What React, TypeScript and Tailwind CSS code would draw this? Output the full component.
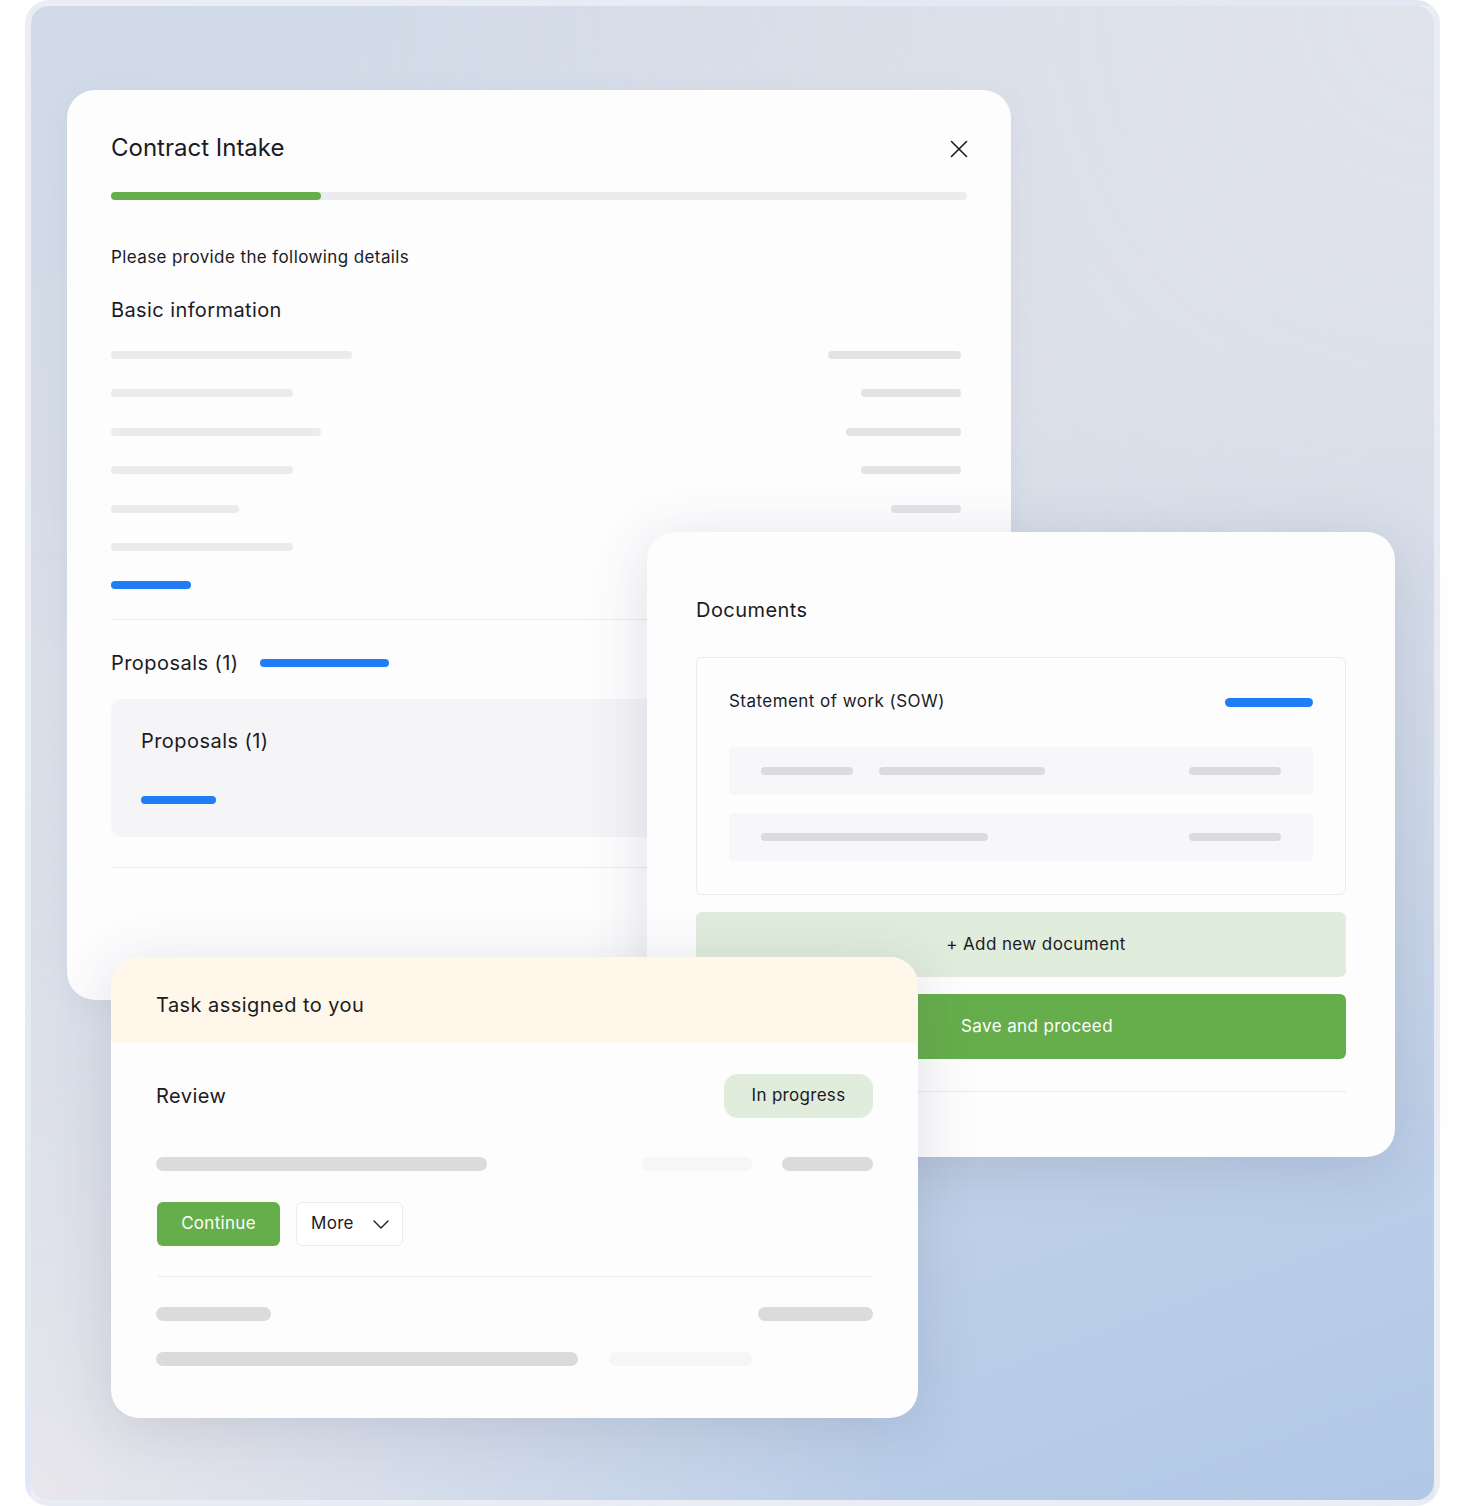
import { X } from "lucide-react";

// skeleton bar colours
const DARK = "bg-[#dbdadd]";
const LIGHT = "bg-[#ebeaed]";
const FAINT = "bg-[#f6f5f8]";

const Bar = ({ w, h = "h-[8px]", tone = LIGHT }: { w: string; h?: string; tone?: string }) => (
  <div className={`${w} ${h} ${tone} rounded-full`} />
);

const basicRows = [
  { left: "w-[241px]", right: "w-[133px]" },
  { left: "w-[182px]", right: "w-[100px]" },
  { left: "w-[210px]", right: "w-[115px]" },
  { left: "w-[182px]", right: "w-[100px]" },
  { left: "w-[128px]", right: "w-[70px]" },
  { left: "w-[182px]", right: "" },
];

const ContractIntake = () => (
  <div className="absolute left-[67px] top-[90px] w-[944px] h-[910px] rounded-[28px] bg-[#fdfdfe] shadow-[0_6px_30px_rgba(70,80,110,0.06)] px-[44px] pt-[42px]">
    <div className="flex items-center justify-between">
      <h1 className="text-[24px] leading-[32px] text-[#1b1b1f]">Contract Intake</h1>
      <X className="w-[30px] h-[30px] mr-[-7px] mt-[2px] text-[#1b1b1f]" strokeWidth={1.3} />
    </div>

    {/* progress */}
    <div className="mt-[28px] h-[8px] w-[856px] rounded-full bg-[#ecebee]">
      <div className="h-full w-[210px] rounded-full bg-[#66ae4b]" />
    </div>

    <p className="mt-[45px] text-[17px] leading-[24px] tracking-[0.4px] text-[#1b1b1f]">Please provide the following details</p>
    <h2 className="mt-[27px] text-[20px] leading-[28px] tracking-[0.4px] text-[#1b1b1f]">Basic information</h2>

    <div className="mt-[27px] flex flex-col gap-[30.4px] w-[850px]">
      {basicRows.map((r, i) => (
        <div key={i} className="flex items-center justify-between">
          <Bar w={r.left} />
          {r.right && <Bar w={r.right} tone="bg-[#e3e2e5]" />}
        </div>
      ))}
    </div>

    <div className="mt-[30px] h-[8px] w-[80px] rounded-full bg-[#1f7ef5]" />

    <div className="mt-[30px] h-px w-[856px] bg-[#ebebed]" />

    <div className="mt-[29px] flex items-center gap-[21px]">
      <span className="text-[20px] leading-[28px] tracking-[0.45px] text-[#1b1b1f]">Proposals (1)</span>
      <div className="h-[8px] w-[129px] rounded-full bg-[#1f7ef5]" />
    </div>

    <div className="mt-[22px] h-[138px] w-[856px] rounded-[12px] bg-[#f5f4f7] px-[30px] pt-[28px]">
      <div className="text-[20px] leading-[28px] tracking-[0.45px] text-[#1b1b1f]">Proposals (1)</div>
      <div className="mt-[41px] h-[8px] w-[75px] rounded-full bg-[#1f7ef5]" />
    </div>

    <div className="mt-[30px] h-px w-[856px] bg-[#ebebed]" />
  </div>
);

const Documents = () => (
  <div className="absolute left-[647px] top-[532px] w-[748px] h-[625px] rounded-[28px] bg-[#fdfdfe] shadow-[0_10px_60px_rgba(60,70,100,0.16)] px-[49px] pt-[64px]">
    <h2 className="text-[20px] leading-[28px] tracking-[0.45px] text-[#1b1b1f]">Documents</h2>

    <div className="mt-[33px] h-[238px] rounded-[6px] border border-[#ebebed] px-[32px] pt-[31px]">
      <div className="flex items-center justify-between">
        <span className="text-[17px] leading-[24px] tracking-[0.45px] text-[#1b1b1f]">Statement of work (SOW)</span>
        <div className="h-[9px] w-[88px] rounded-full bg-[#1f7ef5] mt-[2px]" />
      </div>

      <div className="mt-[34px] flex h-[48px] items-center rounded-[4px] bg-[#f7f6f9] px-[32px]">
        <Bar w="w-[92px]" tone={DARK} />
        <div className="ml-[26px]">
          <Bar w="w-[166px]" tone={DARK} />
        </div>
        <div className="ml-auto">
          <Bar w="w-[92px]" tone={DARK} />
        </div>
      </div>
      <div className="mt-[18px] flex h-[48px] items-center justify-between rounded-[4px] bg-[#f7f6f9] px-[32px]">
        <Bar w="w-[227px]" tone={DARK} />
        <Bar w="w-[92px]" tone={DARK} />
      </div>
    </div>

    <button className="mt-[17px] flex h-[65px] w-full items-center justify-center rounded-[6px] bg-[#e0ecdc] pl-[30px] text-[17px] tracking-[0.4px] text-[#1b1b1f]">
      + Add new document
    </button>
    <button className="mt-[17px] flex h-[65px] w-full items-center justify-center rounded-[6px] bg-[#66ae4b] pl-[32px] text-[17px] tracking-[0.4px] text-white">
      Save and proceed
    </button>

    <div className="mt-[32px] h-px w-full bg-[#ebebed]" />
  </div>
);

const TaskCard = () => (
  <div className="absolute left-[111px] top-[957px] w-[807px] h-[461px] overflow-hidden rounded-[28px] bg-[#fdfdfe] shadow-[0_10px_60px_rgba(60,70,100,0.16)]">
    <div className="h-[86px] bg-[#fef7ea] px-[45px] pt-[34px]">
      <h2 className="text-[20px] leading-[28px] tracking-[0.45px] text-[#1b1b1f]">Task assigned to you</h2>
    </div>

    <div className="px-[45px] pt-[31px]">
      <div className="flex items-center justify-between">
        <span className="text-[20px] leading-[28px] tracking-[0.45px] text-[#1b1b1f]">Review</span>
        <span className="flex h-[44px] w-[149px] items-center justify-center rounded-[14px] bg-[#e0ecdc] text-[17px] tracking-[0.3px] text-[#1b1b1f]">
          In progress
        </span>
      </div>

      <div className="mt-[39px] flex items-center">
        <Bar w="w-[331px]" h="h-[14px]" tone={DARK} />
        <div className="ml-auto">
          <Bar w="w-[110px]" h="h-[14px]" tone={FAINT} />
        </div>
        <div className="ml-[30px]">
          <Bar w="w-[91px]" h="h-[14px]" tone={DARK} />
        </div>
      </div>

      <div className="mt-[31px] flex items-center gap-[16px]">
        <button className="ml-px h-[44px] w-[123px] rounded-[6px] bg-[#66ae4b] text-[17px] tracking-[0.3px] text-white">Continue</button>
        <button className="flex h-[44px] w-[107px] items-center gap-[19px] rounded-[6px] border border-[#ebebed] bg-white pl-[14px] text-[17px] tracking-[0.3px] text-[#1b1b1f]">
          More
          <svg width="16" height="9" viewBox="0 0 16 9" fill="none">
            <path d="M1 1l7 7 7-7" stroke="#1b1b1f" strokeWidth="1.4" strokeLinecap="round" strokeLinejoin="round" />
          </svg>
        </button>
      </div>

      <div className="mt-[30px] ml-[2px] h-px bg-[#ebebed]" />

      <div className="mt-[30px] flex items-center justify-between">
        <Bar w="w-[115px]" h="h-[14px]" tone={DARK} />
        <Bar w="w-[115px]" h="h-[14px]" tone={DARK} />
      </div>
      <div className="mt-[31px] flex items-center gap-[31px]">
        <Bar w="w-[422px]" h="h-[14px]" tone={DARK} />
        <Bar w="w-[143px]" h="h-[14px]" tone={FAINT} />
      </div>
    </div>
  </div>
);

export default function App() {
  return (
    <div className="relative w-[1477px] h-[1506px] bg-white font-['Inter','Liberation_Sans',sans-serif]">
      <div className="absolute left-[25px] top-0 w-[1415px] h-[1506px] rounded-[24px] border-[6px] border-[#eef0f6]/80 [background-image:radial-gradient(ellipse_at_0%_100%,#e8e7ec_0%,rgba(232,231,236,0)_45%),radial-gradient(ellipse_at_100%_0%,#e0e3eb_0%,rgba(224,227,235,0)_55%),linear-gradient(160deg,#d0dae8_0%,#d8dde8_35%,#c6d4e8_65%,#b0c8e7_100%)]" />
      <ContractIntake />
      <Documents />
      <TaskCard />
    </div>
  );
}
